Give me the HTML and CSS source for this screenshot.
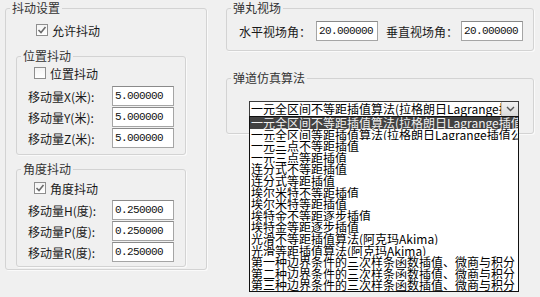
FILE: index.html
```
<!DOCTYPE html>
<html lang="zh">
<head>
  <meta charset="UTF-8">
  <title>抖动设置</title>
  <link rel="stylesheet" href="styles.css">
</head>
<body>
  <div class="page">
    <!-- 左侧：抖动设置 -->
    <div class="group shake">
      <div class="title">抖动设置</div>
      <div class="check allow">
        <span class="box"><svg width="10" height="10" viewBox="0 0 10 10"><path d="M1.5 5 L4 7.5 L8.5 2" fill="none" stroke="#6a6a6a" stroke-width="1.6"/></svg></span>允许抖动
      </div>

      <div class="group sub pos">
        <div class="title">位置抖动</div>
        <div class="check"><span class="box"></span>位置抖动</div>
        <div class="field"><span class="name">移动量X(米):</span><input class="num" value="5.000000"></div>
        <div class="field"><span class="name">移动量Y(米):</span><input class="num" value="5.000000"></div>
        <div class="field"><span class="name">移动量Z(米):</span><input class="num" value="5.000000"></div>
      </div>

      <div class="group sub ang">
        <div class="title">角度抖动</div>
        <div class="check">
          <span class="box"><svg width="10" height="10" viewBox="0 0 10 10"><path d="M1.5 5 L4 7.5 L8.5 2" fill="none" stroke="#6a6a6a" stroke-width="1.6"/></svg></span>角度抖动
        </div>
        <div class="field"><span class="name">移动量H(度):</span><input class="num" value="0.250000"></div>
        <div class="field"><span class="name">移动量P(度):</span><input class="num" value="0.250000"></div>
        <div class="field"><span class="name">移动量R(度):</span><input class="num" value="0.250000"></div>
      </div>
    </div>

    <!-- 右侧 -->
    <div class="right">
      <div class="group view">
        <div class="title">弹丸视场</div>
        <div class="view-row">
          <span class="vname">水平视场角：</span><input class="num" value="20.000000">
          <span class="vname second">垂直视场角：</span><input class="num" value="20.000000">
        </div>
      </div>

      <div class="group algo">
        <div class="title">弹道仿真算法</div>
        <div class="combo">
          <div class="combo-text">一元全区间不等距插值算法(拉格朗日Lagrange插值公式)</div>
          <div class="combo-btn"><svg width="9" height="6" viewBox="0 0 9 6"><path d="M1 1 L4.5 4.5 L8 1" fill="none" stroke="#555" stroke-width="1.4"/></svg></div>
          <ul class="options">
            <li class="selected">一元全区间不等距插值算法(拉格朗日Lagrange插值公式)</li>
            <li>一元全区间等距插值算法(拉格朗日Lagrange插值公式)</li>
            <li>一元三点不等距插值</li>
            <li>一元三点等距插值</li>
            <li>连分式不等距插值</li>
            <li>连分式等距插值</li>
            <li>埃尔米特不等距插值</li>
            <li>埃尔米特等距插值</li>
            <li>埃特金不等距逐步插值</li>
            <li>埃特金等距逐步插值</li>
            <li>光滑不等距插值算法(阿克玛Akima)</li>
            <li>光滑等距插值算法(阿克玛Akima)</li>
            <li>第一种边界条件的三次样条函数插值、微商与积分</li>
            <li>第二种边界条件的三次样条函数插值、微商与积分</li>
            <li>第三种边界条件的三次样条函数插值、微商与积分</li>
          </ul>
        </div>
      </div>
    </div>
  </div>
</body>
</html>
```

FILE: styles.css
```
body {
  margin: 0;
  background-color: #f0f0f0;
  font-family: "Noto Sans CJK SC", "Liberation Sans", sans-serif;
  font-size: 12px;
  color: #1a1a1a;
}

.page {
  box-sizing: border-box;
  min-height: 297px;
  display: flex;
  align-items: flex-start;
  padding: 8px 0 0 5px;
}

/* 分组框 */
.group {
  box-sizing: border-box;
  display: flex;
  flex-direction: column;
  align-items: flex-start;
  border: 1px solid #d3d3d3;
  border-radius: 3px;
  box-shadow: 1px 1px 0 #fafafa;
}

.title {
  margin: -8px 0 0 4px;
  padding: 0 2px;
  line-height: 14px;
  background-color: #f0f0f0;
  color: #333;
  white-space: nowrap;
}

.shake {
  width: 202px;
  height: 262px;
}

.sub {
  width: 170px;
  margin-left: 10px;
}

.pos {
  margin-top: 18px;
  padding-bottom: 6px;
}

.ang {
  margin-top: 14px;
  padding-bottom: 4px;
}

/* 复选框 */
.check {
  display: flex;
  align-items: center;
  height: 12px;
  margin-left: 17px;
}

.allow {
  height: 16px;
  margin: 7px 0 0 30px;
}

.pos .check {
  margin-top: 4px;
}

.ang .check {
  margin-top: 6px;
}

.box {
  box-sizing: border-box;
  width: 12px;
  height: 12px;
  margin-right: 4px;
  border: 1px solid #8e8e8e;
  background: linear-gradient(#f4f4f4, #ffffff);
  display: flex;
  align-items: center;
  justify-content: center;
}

/* 输入行 */
.field {
  display: flex;
  align-items: center;
  height: 20px;
  margin-top: 1px;
}

.pos .check + .field {
  margin-top: 7px;
}

.ang .check + .field {
  margin-top: 6px;
}

.name {
  width: 84px;
  margin-left: 11px;
  white-space: nowrap;
}

.num {
  box-sizing: border-box;
  width: 62px;
  height: 20px;
  margin: 0;
  padding: 0 0 0 2px;
  border: 1px solid #a5a5a5;
  border-top-color: #8a8a8a;
  background-color: #fff;
  font-family: "Liberation Mono", monospace;
  font-size: 11px;
  letter-spacing: -0.6px;
  color: #111;
  outline: none;
}

/* 右侧 */
.right {
  display: flex;
  flex-direction: column;
  width: 308px;
  margin-left: 19px;
}

.right .group {
  align-items: stretch;
}

.right .title {
  align-self: flex-start;
}

.view {
  padding-bottom: 9px;
}

.view-row {
  display: flex;
  align-items: center;
  margin: 6px 0 0 12px;
}

.vname {
  width: 77px;
  white-space: nowrap;
}

.vname.second {
  width: 75px;
  margin-left: 8px;
}

.algo {
  margin-top: 27px;
  padding-bottom: 16px;
}

/* 下拉框 */
.combo {
  position: relative;
  box-sizing: border-box;
  display: flex;
  width: 270px;
  height: 16px;
  margin: 16px 0 0 22px;
  border: 1px solid #3c3c3c;
  background-color: #fff;
}

.combo-text {
  flex: 1;
  padding-left: 1px;
  line-height: 14px;
  white-space: nowrap;
  overflow: hidden;
  color: #000;
}

.combo-btn {
  width: 16px;
  border-left: 1px solid #bdbdbd;
  background: linear-gradient(#f2f2f2, #d9d9d9);
  display: flex;
  align-items: center;
  justify-content: center;
}

.options {
  position: absolute;
  top: 14px;
  left: -1px;
  width: 270px;
  box-sizing: border-box;
  margin: 0;
  padding: 0;
  list-style: none;
  border: 1px solid #111;
  background-color: #fff;
  z-index: 2;
}

.options li {
  height: 11.6px;
  line-height: 11.6px;
  padding-left: 1px;
  white-space: nowrap;
  overflow: hidden;
  color: #000;
}

.options li.selected {
  background-color: #424242;
  color: #f0f0f0;
}
```
